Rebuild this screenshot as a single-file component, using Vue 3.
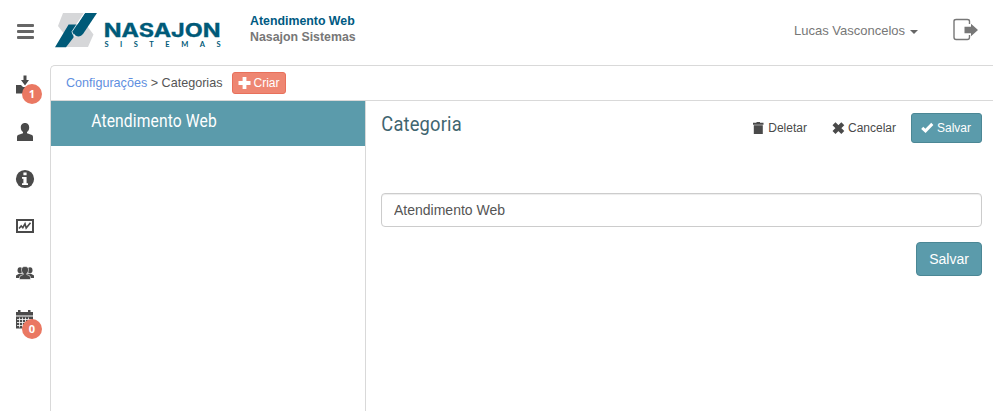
<script setup>
import { ref } from 'vue'

const name = ref('Atendimento Web')
const nav = [
  { id: 'inbox', badge: '1' },
  { id: 'user' },
  { id: 'info' },
  { id: 'chart' },
  { id: 'group' },
  { id: 'calendar', badge: '0' },
]
</script>

<template>
  <div class="app">
    <header class="header">
      <button class="toggle" aria-label="Menu"><span></span><span></span><span></span></button>
      <svg class="logo" width="170" height="38" viewBox="0 0 170 38">
        <path d="M8 0H29L14 22H10L3 13Z" fill="#d6d7d9" />
        <path d="M29 12 31 11.5 38.5 21.5 33 34H10L18 23Z" fill="#d6d7d9" />
        <path d="M0 34.3 13.6 11.5H24.2L18.5 21V24.5L11 34.3Z" fill="#005a78" />
        <path d="M30 0H42L28 21Q25 25 20.5 22.5L17.5 19Z" fill="#005a78" />
        <path d="M29.4 0 17 18.6Q17 22 20.5 23.4" fill="none" stroke="#fff" stroke-width=".8" />
        <text class="brand" x="48.7" y="23.8" textLength="117" lengthAdjust="spacingAndGlyphs">NASAJON</text>
        <text class="brand-sub" x="49.5" y="34" textLength="116" lengthAdjust="spacing">SISTEMAS</text>
      </svg>
      <div class="tenant">
        <strong class="system">Atendimento Web</strong>
        <strong>Nasajon Sistemas</strong>
      </div>
      <div class="account">Lucas Vasconcelos <i class="caret"></i></div>
      <svg class="logout" width="26" height="23" viewBox="0 0 26 23">
        <path d="M16.5 6V3.2Q16.5 1.5 14.3 1.5H3.2Q1 1.5 1 3.2V19.3Q1 21.5 3.2 21.5H14.3Q16.5 21.5 16.5 19.3V17" fill="none" stroke="#777" stroke-width="1.4" />
        <path d="M11.5 8.7H18V5.7L25 12 18 18.2V15.2H11.5Z" fill="#777" />
      </svg>
    </header>

    <div class="body">
      <nav class="sidebar">
        <a v-for="item in nav" :key="item.id" class="nav-item">
          <svg width="20" height="20" viewBox="0 0 20 20" fill="#4a4a4a">
            <template v-if="item.id === 'inbox'">
              <path d="M8.5 .5H11.5V5H14L10 10.5 6 5H8.5Z" />
              <path d="M1 10H6L8 12H18V18.5H1Z" />
            </template>
            <path v-else-if="item.id === 'user'" d="M10 1C13 1 14.2 3.3 14.2 5.5 14.2 7.6 13.3 9 12 10V11.2L17 13Q18 13.6 18 15V19H2V15Q2 13.6 3 13L8 11.2V10C6.7 9 5.8 7.6 5.8 5.5 5.8 3.3 7 1 10 1Z" />
            <template v-else-if="item.id === 'info'">
              <circle cx="10" cy="10" r="9.1" />
              <path d="M8.4 3.5H11.6V6.2H8.4ZM7 8H11.6V14.2H13V16H7V14.2H8.4V9.8H7Z" fill="#fff" />
            </template>
            <template v-else-if="item.id === 'chart'">
              <path fill-rule="evenodd" d="M1 3H19V17H1ZM3 5V15H17V5Z" />
              <path d="M4 12.5 6.2 10 7.8 11.7 10 7.8 11.2 12 15.5 6.7" fill="none" stroke="#4a4a4a" stroke-width="1.6" />
            </template>
            <template v-else-if="item.id === 'group'">
              <ellipse cx="5" cy="7.2" rx="2.5" ry="3" />
              <ellipse cx="15" cy="7.2" rx="2.5" ry="3" />
              <path d="M1 15V12.4L4 10.7H16L19 12.4V15Z" />
              <path d="M10 3.5C12.7 3.5 13.8 5.2 13.5 7.4 13.2 9 12.5 10 11.7 10.7V11.5L15 13Q15.6 13.5 15.6 16.5H4.4Q4.4 13.5 5 13L8.3 11.5V10.7C7.5 10 6.8 9 6.5 7.4 6.2 5.2 7.3 3.5 10 3.5Z" stroke="#fff" stroke-width=".6" />
            </template>
            <template v-else>
              <path d="M1 2H3V0H5.5V2H13V0H15.5V2H18V5.5H1ZM1 6.5H18V18.5H1Z" />
              <path d="M2 9.5H17M2 12.5H17M2 15.5H17M4.5 7.5V17.5M7.5 7.5V17.5M10.5 7.5V17.5M13.5 7.5V17.5" stroke="#fff" stroke-width=".8" />
            </template>
          </svg>
          <span v-if="item.badge" class="badge">{{ item.badge }}</span>
        </a>
      </nav>

      <main class="main">
        <div class="crumbs">
          <a>Configurações</a><span>&nbsp;&gt; Categorias</span>
          <button class="create">
            <svg width="13" height="12" viewBox="0 0 12 12"><path d="M4.1 0H7.9V4.1H12V7.9H7.9V12H4.1V7.9H0V4.1H4.1Z" fill="#fff" /></svg>Criar
          </button>
        </div>
        <div class="columns">
          <aside class="list">
            <a class="list-item">
              <svg width="200" height="36"><text x=".3" y="20" textLength="125.5" lengthAdjust="spacingAndGlyphs">Atendimento Web</text></svg>
            </a>
          </aside>
          <section class="detail">
            <div class="toolbar">
              <svg class="title" width="100" height="34"><text x=".3" y="20" textLength="80.5" lengthAdjust="spacingAndGlyphs">Categoria</text></svg>
              <button class="action delete">
                <svg width="11" height="12" viewBox="0 0 11 12"><path d="M0 .8H3.5V0H7V.8H10.5V2.7H0ZM.8 3.3H9.8V12H.8Z" fill="#4a4a4a" /></svg>Deletar
              </button>
              <button class="action cancel">
                <svg width="13" height="12" viewBox="0 0 13 12"><path d="M2 1.7 10.8 10.5M10.8 1.7 2 10.5" stroke="#4a4a4a" stroke-width="4.2" /></svg>Cancelar
              </button>
              <button class="action save">
                <svg width="13" height="12" viewBox="0 0 13 12"><path d="M1.2 5.8 4.5 8.8 11.3 1.9" fill="none" stroke="#fff" stroke-width="3" /></svg>Salvar
              </button>
            </div>
            <input v-model="name" class="field" type="text" />
            <button class="submit">Salvar</button>
          </section>
        </div>
      </main>
    </div>
  </div>
</template>

<style>
body { background: #fff; overflow: hidden; }
</style>

<style scoped>
* { box-sizing: border-box; }
.app { display: flex; flex-direction: column; height: 411px; width: 993px; font-family: "Liberation Sans", Arial, sans-serif; font-size: 13px; color: #555; }
button { font-family: inherit; margin: 0; }
svg { display: block; flex: none; }
.header { display: flex; align-items: flex-start; height: 65px; flex: none; }
.toggle { display: flex; flex-direction: column; gap: 3px; width: 17px; padding: 0; margin: 24px 0 0 17px; border: 0; background: none; }
.toggle span { height: 3px; border-radius: 1px; background: #666; }
.logo { margin: 13px 0 0 21px; }
.brand { font: 700 18.8px "Inter", sans-serif; fill: #005a78; stroke: #005a78; stroke-width: .3px; }
.brand-sub { font: 700 7.5px "Lato", sans-serif; fill: #005a78; }
.tenant { display: flex; flex-direction: column; margin: 13px 0 0 25px; font-size: 12.35px; line-height: 16px; color: #777; }
.system { color: #005a82; }
.account { display: flex; align-items: center; gap: 5px; margin: 22px 0 0 auto; line-height: 18px; color: #777; }
.caret { border: 4px solid transparent; border-top-color: #666; border-bottom: 0; margin-top: 2px; }
.logout { margin: 18px 14px 0 35px; }
.body { display: flex; flex: 1; min-height: 0; }
.sidebar { width: 50px; flex: none; padding: 10px 0 0 15px; }
.nav-item { display: block; position: relative; height: 47px; }
.badge { position: absolute; left: 7px; top: 9px; width: 20px; height: 20px; border-radius: 50%; background: #ea7862; color: #fff; font: 700 11px/20px "Open Sans", sans-serif; text-align: center; }
.main { display: flex; flex-direction: column; flex: 1; border: solid #d9d9d9; border-width: 1px 0 0 1px; border-top-left-radius: 5px; }
.crumbs { display: flex; align-items: center; height: 35px; padding-left: 15px; border-bottom: 1px solid #d9d9d9; font-size: 12.6px; }
.crumbs a { color: #5f8fe0; }
.create { display: flex; align-items: center; gap: 2px; width: 54px; height: 22px; padding: 0 0 0 5px; margin-left: 10px; border: 1px solid #e8705b; border-radius: 3px; background: #ee8672; color: #fff; font-size: 12px; }
.columns { display: flex; flex: 1; }
.list { width: 315px; border-right: 1px solid #d9d9d9; }
.list-item { display: block; height: 45px; padding: 6px 0 0 40px; background: #5b9bab; }
.list-item text { font: 400 18.8px "Roboto", sans-serif; letter-spacing: .15px; fill: #fff; }
.detail { display: flex; flex-direction: column; flex: 1; padding: 10px 11px 0 15px; }
.toolbar { display: flex; align-items: center; height: 34px; }
.title text { font: 400 20.5px "Roboto", sans-serif; letter-spacing: .2px; fill: #3f6570; }
.action { display: flex; align-items: center; gap: 4px; height: 30px; padding: 0; border: 0; background: none; color: #4a4a4a; font-size: 12px; }
.delete { margin-left: auto; }
.cancel { margin-left: 25px; gap: 3px; }
.save { width: 71px; gap: 3px; padding-left: 9px; margin-left: 15px; border: 1px solid #4b8795; border-radius: 3px; background: #5b9bab; color: #fff; }
.field { height: 34px; margin-top: 48px; padding: 6px 12px; border: 1px solid #ccc; border-radius: 4px; box-shadow: inset 0 1px 1px rgba(0, 0, 0, .075); font: 14px "Liberation Sans", Arial, sans-serif; color: #555; background: #fff; }
.submit { align-self: flex-end; width: 66px; height: 34px; margin-top: 15px; padding: 0; border: 1px solid #4b8795; border-radius: 4px; background: #5b9bab; color: #fff; font-size: 14px; }
</style>
